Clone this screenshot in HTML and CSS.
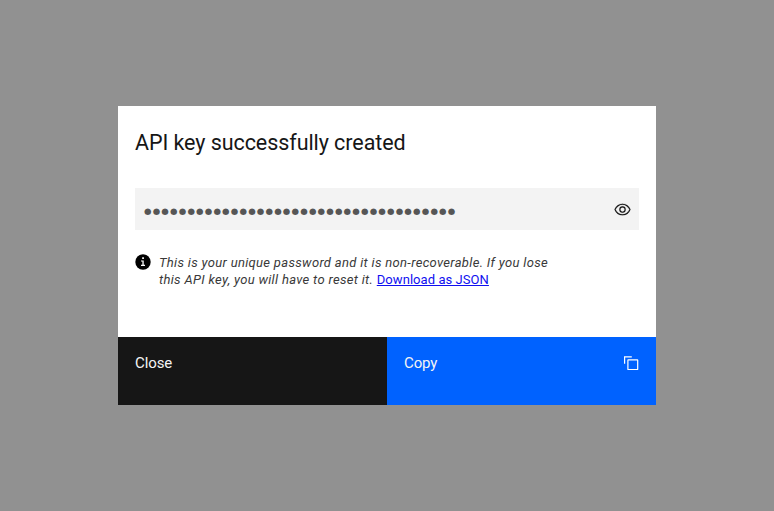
FILE: index.html
```html
<!DOCTYPE html>
<html lang="en">
<head>
<meta charset="utf-8">
<title>API key</title>
<link rel="stylesheet" href="styles.css">
</head>
<body>
<main class="modal" role="dialog" aria-labelledby="title">
  <div class="body">
    <h1 id="title">API key successfully created</h1>
    <div class="field">
      <span class="key">●●●●●●●●●●●●●●●●●●●●●●●●●●●●●●●●●●●●</span>
      <svg class="eye" viewBox="0 0 32 32" fill="#161616" stroke="#161616" stroke-width=".3"><path d="M30.94 15.66A16.69 16.69 0 0 0 16 5 16.69 16.69 0 0 0 1.06 15.66a1 1 0 0 0 0 .68A16.69 16.69 0 0 0 16 27a16.69 16.69 0 0 0 14.94-10.66 1 1 0 0 0 0-.68ZM16 25c-5.3 0-10.9-3.93-12.93-9C5.1 10.93 10.7 7 16 7s10.9 3.93 12.93 9C26.9 21.07 21.3 25 16 25Z"/><path d="M16 10a6 6 0 1 0 6 6 6 6 0 0 0-6-6Zm0 10a4 4 0 1 1 4-4 4 4 0 0 1-4 4Z"/></svg>
    </div>
    <div class="notice">
      <svg class="info" viewBox="0 0 16 16"><circle cx="8" cy="8" r="7.7"/><path fill="#fff" d="M7.2 3.3h1.7v1.6H7.2zM6 6.5h2.7v4.3H10v1.1H6v-1.1h1.4V7.6H6z"/></svg>
      <p><em>This is your unique password and it is non-recoverable. If you lose</em><br><em>this API key, you will have to reset it.</em> <a href="#">Download as JSON</a></p>
    </div>
  </div>
  <footer>
    <button class="close" type="button">Close</button>
    <button class="copy" type="button"><span>Copy</span>
      <svg class="copy-icon" viewBox="0 0 16 16" fill="none" stroke="#fff" stroke-width="1.2"><rect x="4.9" y="4.9" width="9.8" height="9.6" rx=".3"/><path d="M1.6 8.8V1.8h7.2"/></svg>
    </button>
  </footer>
</main>
</body>
</html>
```
FILE: styles.css
```css
* { box-sizing: border-box; }
body {
  margin: 0;
  height: 511px;
  display: flex;
  justify-content: center;
  align-items: flex-start;
  padding-top: 106.4px;
  background: #919191;
  color: #161616;
  font-family: Roboto, "Liberation Sans", sans-serif;
}
.modal {
  width: 538px;
  height: 298.4px;
  display: flex;
  flex-direction: column;
  background: #fff;
}
.body { flex: 1; padding: 22.6px 17px 0; }
h1 {
  margin: 0;
  font-size: 21.5px;
  font-weight: 400;
  line-height: 28px;
  letter-spacing: -.07px;
  white-space: nowrap;
}
.field {
  height: 42px;
  margin-top: 31px;
  padding: 0 8px 0 9px;
  display: flex;
  align-items: center;
  justify-content: space-between;
  background: #f3f3f3;
}
.key {
  color: #565656;
  font: 8.6px/14px "DejaVu Sans", sans-serif;
  letter-spacing: 1.18px;
  padding-top: 5px;
}
.eye { width: 17px; height: 17px; margin-top: 1px; }
.notice { display: flex; margin-top: 24px; gap: 8px; }
.info { width: 16px; height: 16px; flex: none; }
.notice p {
  margin: 0;
  font-size: 13px;
  line-height: 17px;
  letter-spacing: .32px;
  white-space: nowrap;
}
em { color: #393939; }
a { color: #0f0ff0; letter-spacing: .06px; text-underline-offset: 1px; text-decoration-thickness: 1px; }
footer { height: 67.4px; display: flex; }
button {
  flex: 1;
  display: flex;
  justify-content: space-between;
  align-items: flex-start;
  margin: 0;
  padding: 16px 17px 0;
  border: 0;
  color: #f4f4f4;
  font: 15px/20px Roboto, sans-serif;
}
.close { background: #161616; letter-spacing: -.1px; }
.copy { background: #0062ff; letter-spacing: -.1px; }
.copy-icon { width: 16px; height: 16px; margin-top: 2px; }
```
